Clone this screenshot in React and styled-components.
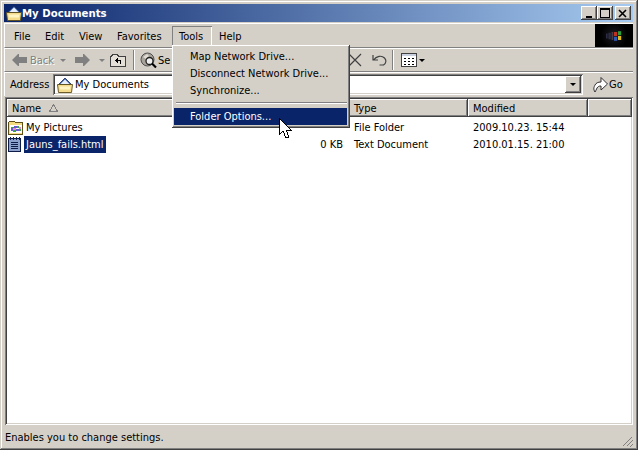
import React from "react";
import styled, { createGlobalStyle } from "styled-components";

const Global = createGlobalStyle`
html,body{margin:0;padding:0;background:#d4d0c8;}
*{box-sizing:border-box;}
body{font-family:"DejaVu Sans Condensed","DejaVu Sans","Liberation Sans",sans-serif;font-size:11px;color:#000;}
`
const Frame = styled.div`
width:638px;
height:450px;
background:#d4d0c8;
padding:4px 5px 2px 4px;
display:flex;
flex-direction:column;
position:relative;
overflow:hidden;
box-shadow:inset -1px -1px 0 #404040, inset 1px 1px 0 #d4d0c8, inset -2px -2px 0 #808080, inset 2px 2px 0 #fff;
`
const TitleBar = styled.div`
height:18px;
flex:none;
display:flex;
align-items:center;
padding:0 2px;
background:linear-gradient(90deg,#0a246a,#a6caf0);
color:#fff;
font-weight:700;
font-size:11.300px;
margin-bottom:1px;
`
const TitleText = styled.span`
flex:1;
`
const WinBtn = styled.div`
width:16px;
height:14px;
margin-left:${p=>p.$gap||0}px;
background:#d4d0c8;
box-shadow:inset -1px -1px 0 #404040, inset 1px 1px 0 #fff, inset -2px -2px 0 #808080;
display:flex;
align-items:center;
justify-content:center;
`
const MenuRow = styled.div`
height:25px;
flex:none;
display:flex;
align-items:stretch;
border-top:1px solid #fff;
border-bottom:1px solid #808080;
border-left:1px solid #fff;
padding:2px 0 0 2px;
`
const MenuItem = styled.div`
width:${p=>p.$w}px;
height:20px;
padding:0 7px;
display:flex;
align-items:center;
${p=>p.$open && "box-shadow:inset 1px 1px 0 #808080, inset -1px -1px 0 #fff;"}
`
const Brand = styled.div`
margin-left:auto;
margin-top:-2px;
width:38px;
height:23px;
background:radial-gradient(circle at 50% 50%,#1c1c24 0,#000 60%);
display:flex;
align-items:center;
justify-content:center;
`
const Toolbar = styled.div`
height:24px;
flex:none;
display:flex;
align-items:center;
border-top:1px solid #fff;
border-bottom:1px solid #808080;
border-left:1px solid #fff;
padding-left:7px;
`
const Tool = styled.div`
display:flex;
align-items:center;
margin-left:${p=>p.$ml||0}px;
color:${p=>p.$off?"#808080":"#000"};
${p=>p.$off && "text-shadow:1px 1px 0 #fff;"}
`
const ToolLabel = styled.span`
margin-left:${p=>p.$ml||0}px;
`
const Caret = styled.div`
width:0;
height:0;
margin-left:${p=>p.$ml||0}px;
border-left:3px solid transparent;
border-right:3px solid transparent;
border-top:3px solid ${p=>p.$off?"#808080":"#000"};
`
const ToolSep = styled.div`
width:2px;
height:20px;
margin-left:${p=>p.$ml||0}px;
border-left:1px solid #808080;
border-right:1px solid #fff;
`
const AddressRow = styled.div`
height:24px;
flex:none;
display:flex;
align-items:center;
border-top:1px solid #fff;
border-left:1px solid #fff;
padding-left:5px;
`
const AddressLabel = styled.span`
width:43px;
`
const Combo = styled.div`
width:530px;
height:21px;
display:flex;
align-items:center;
background:#fff;
box-shadow:inset 1px 1px 0 #808080, inset -1px -1px 0 #fff, inset 2px 2px 0 #404040, inset -2px -2px 0 #d4d0c8;
padding:0 2px 0 4px;
`
const ComboText = styled.span`
margin-left:2px;
flex:1;
`
const ComboBtn = styled.div`
width:16px;
height:17px;
background:#d4d0c8;
box-shadow:inset -1px -1px 0 #404040, inset 1px 1px 0 #fff, inset -2px -2px 0 #808080;
display:flex;
align-items:center;
justify-content:center;
`
const Go = styled.div`
display:flex;
align-items:center;
margin-left:10px;
`
const List = styled.div`
flex:1;
display:flex;
flex-direction:column;
background:#fff;
margin:1px 0 0 1px;
box-shadow:inset 1px 1px 0 #808080, inset -1px -1px 0 #fff, inset 2px 2px 0 #404040, inset -2px -2px 0 #d4d0c8;
padding:2px 0 2px 2px;
`
const Header = styled.div`
height:18px;
flex:none;
display:flex;
background:#d4d0c8;
margin-right:1px;
`
const HeadCell = styled.div`
width:${p=>p.$w}px;
flex:${p=>p.$grow?1:"none"};
height:18px;
display:flex;
align-items:center;
padding-left:5px;
box-shadow:inset -1px -1px 0 #404040, inset 1px 1px 0 #fff, inset -2px -2px 0 #808080;
`
const SortMark = styled.svg`
margin-left:8px;
`
const Row = styled.div`
height:17px;
display:flex;
align-items:center;
margin-top:${p=>p.$mt||0}px;
`
const NameCell = styled.div`
width:254px;
display:flex;
align-items:center;
padding-left:1px;
`
const NameText = styled.span`
height:17px;
line-height:17px;
padding:0 2px;
${p=>p.$sel && "background:#0a246a;color:#fff;"}
`
const SizeCell = styled.div`
width:88px;
padding-right:6px;
text-align:right;
`
const TypeCell = styled.div`
width:119px;
padding-left:5px;
`
const DateCell = styled.div`
padding-left:5px;
`
const Status = styled.div`
height:23px;
flex:none;
display:flex;
align-items:center;
padding:1px 0 0 1px;
position:relative;
`
const Grip = styled.svg`
position:absolute;
right:0;
bottom:1px;
`
const Dropdown = styled.div`
position:absolute;
left:172px;
top:45px;
width:178px;
height:83px;
background:#d4d0c8;
padding:3px 3px 3px 2px;
box-shadow:inset -1px -1px 0 #404040, inset 1px 1px 0 #fff, inset -2px -2px 0 #808080;
`
const DropItem = styled.div`
height:17px;
display:flex;
align-items:center;
padding-left:16px;
${p=>p.$sel && "background:#0a246a;color:#fff;"}
`
const DropSep = styled.div`
height:2px;
margin:3px 0 4px 2px;
border-top:1px solid #808080;
border-bottom:1px solid #fff;
`
const Pointer = styled.svg`
position:absolute;
left:279px;
top:118px;
`
const BlurFlag = styled.svg`
filter:blur(0.5px);
`
const IconSvg = styled.svg`
flex:none;
`

const FolderIcon = ()=>(
    <IconSvg width="16" height="16" viewBox="0 0 16 16">
        <path d="M1 8l7-7 6 6v2h-13z" fill="#3c62ac" stroke="#1c2c5c" strokeWidth="0.800"/>
        <path d="M8 2.500l4.500 4.500h-9z" fill="#e8f0ff"/>
        <path d="M0.500 7.500h15l-1 8h-13z" fill="#f4dc8c" stroke="#5a4c18" strokeWidth="0.900"/>
        <path d="M2.500 9.500h11l-0.500 3h-10z" fill="#fff4c4"/>
    </IconSvg>
)
const PicturesIcon = ()=>(
    <IconSvg width="16" height="16" viewBox="0 0 16 16" shapeRendering="crispEdges">
        <path d="M0.500 2.500l1-1h5l1 1h7v12h-14z" fill="#f6dc80" stroke="#5c5018"/>
        <rect x="2" y="5" width="12" height="8" fill="#fff"/>
        <path d="M3 7h3v1h-3zM9 6h2v2h-2zM5 10h3v2h-3zM11 9h2v2h-2z" fill="#35a548"/>
        <path d="M6 6h3v2h-3zM3 8h2v3h-2zM8 9h3v2h-3z" fill="#6a58d0"/>
        <path d="M11 7h2v2h-2zM5 8h3v2h-3z" fill="#e88ab8"/>
    </IconSvg>
)
const NoteIcon = ()=>(
    <IconSvg width="16" height="16" viewBox="0 0 16 16" shapeRendering="crispEdges">
        <rect x="0.500" y="1.500" width="12" height="13" fill="#8ca2cc" stroke="#101c48"/>
        <path d="M2 0h1v3h-1zM5 0h1v3h-1zM8 0h1v3h-1zM11 0h1v3h-1z" fill="#101c48"/>
        <path d="M3 5h7v1h-7zM3 7h7v1h-7zM3 9h7v1h-7zM3 11h7v1h-7z" fill="#101c48"/>
    </IconSvg>
)
const Arrow = ({flip})=>(
    <svg width="15" height="12" viewBox="0 0 15 12" style={{transform:flip?"scaleX(-1)":"none"}}>
        <path d="M6 0h1v3h8v6h-8v3h-1l-6-6z" fill="#808080"/>
    </svg>
)
const UpIcon = ()=>(
    <svg width="16" height="14" viewBox="0 0 16 14" shapeRendering="crispEdges">
        <path d="M0.500 13.500v-10h1l1-2h5l1 2h7v10z" fill="#e4e0d8" stroke="#404040"/>
        <path d="M5 7h1v-1h1v-1h1v2h3v4h-1v-3h-2v2h-1v-1h-1v-1h-1z" fill="#000"/>
    </svg>
)
const SearchIcon = ()=>(
    <svg width="17" height="17" viewBox="0 0 17 17">
        <circle cx="7.500" cy="7.500" r="6.500" fill="#a8a49c" stroke="#505050"/>
        <path d="M3 5l4-3 2 2-3 3zM9 11l3-2 1 1-3 3z" fill="#e0dcd4"/>
        <circle cx="9.500" cy="9" r="3.500" fill="#f0f0f0" stroke="#202020" strokeWidth="1.300"/>
        <path d="M12 11.500l4 4" stroke="#000" strokeWidth="2.200"/>
    </svg>
)
const Views = ()=>(
    <svg width="16" height="14" viewBox="0 0 16 14" shapeRendering="crispEdges">
        <rect x="0.500" y="0.500" width="15" height="13" fill="#fff" stroke="#404040"/>
        <path d="M1 1h14v2h-14z" fill="#c8d0e0"/>
        <path d="M3 5h2v1h-2zM7 5h2v1h-2zM11 5h2v1h-2zM3 8h2v1h-2zM7 8h2v1h-2zM11 8h2v1h-2zM3 11h2v1h-2zM7 11h2v1h-2zM11 11h2v1h-2z" fill="#000"/>
    </svg>
)
const GoIcon = ()=>(
    <svg width="16" height="17" viewBox="0 0 16 17">
        <path d="M2 16c-2-3-1-5 0-7 1-2 3-3 6-3v-4.500l6.500 6.500-6.500 6v-4c-2 0-3 .500-4 2-.800 1.500-1.200 3-2 4z" fill="#fff" stroke="#303030"/>
    </svg>
)
const Flag = ()=>(
    <BlurFlag width="16" height="12" viewBox="0 0 20 14">
        <path d="M0 4h2v6h-2zM3 3h3v8h-3z" fill="#2c2c44"/>
        <path d="M7 2h2v10h-2z" fill="#4a3c44"/>
        <path d="M10 2h4v5h-4z" fill="#c03020"/>
        <path d="M15 1h4v5h-4z" fill="#2f9a3a"/>
        <path d="M10 8h4v5h-4z" fill="#3058b8"/>
        <path d="M15 7h4v5h-4z" fill="#e0b820"/>
    </BlurFlag>
)

const App = ()=>{
    return(
        <>
            <Global/>
            <Frame>
                <TitleBar>
                    <FolderIcon/>
                    <TitleText>My Documents</TitleText>
                    <WinBtn>
                        <svg width="8" height="9" shapeRendering="crispEdges"><path d="M1 7h6v2h-6z" fill="#000"/></svg>
                    </WinBtn>
                    <WinBtn>
                        <svg width="10" height="10" shapeRendering="crispEdges"><path d="M0.500 1.500h9v8h-9zM0 0.500h10" fill="none" stroke="#000"/></svg>
                    </WinBtn>
                    <WinBtn $gap={2}>
                        <svg width="10" height="9"><path d="M1 1l7 7M8 1l-7 7" stroke="#000" strokeWidth="1.600"/></svg>
                    </WinBtn>
                </TitleBar>
                <MenuRow>
                    <MenuItem $w={31}>File</MenuItem>
                    <MenuItem $w={34}>Edit</MenuItem>
                    <MenuItem $w={38}>View</MenuItem>
                    <MenuItem $w={62}>Favorites</MenuItem>
                    <MenuItem $w={40} $open>Tools</MenuItem>
                    <MenuItem $w={40}>Help</MenuItem>
                    <Brand><Flag/></Brand>
                </MenuRow>
                <Toolbar>
                    <Tool $off><Arrow/><ToolLabel $ml={3}>Back</ToolLabel></Tool>
                    <Caret $off $ml={6}/>
                    <Tool $ml={9}><Arrow flip/></Tool>
                    <Caret $off $ml={9}/>
                    <Tool $ml={5}><UpIcon/></Tool>
                    <ToolSep $ml={7}/>
                    <Tool $ml={5}><SearchIcon/><ToolLabel $ml={1}>Se</ToolLabel></Tool>
                    <Tool $ml={178}>
                        <svg width="14" height="14"><path d="M1 1l12 12M13 1l-12 12" stroke="#404040" strokeWidth="1.200"/></svg>
                    </Tool>
                    <Tool $ml={10}>
                        <svg width="16" height="12" viewBox="0 0 16 12"><path d="M1 1v5h5M1.500 6c3-4 8-5 11-2 2 2 2 5-1 7h-4" fill="none" stroke="#404040" strokeWidth="1.200"/></svg>
                    </Tool>
                    <ToolSep $ml={4}/>
                    <Tool $ml={7}><Views/></Tool>
                    <Caret $ml={2}/>
                </Toolbar>
                <AddressRow>
                    <AddressLabel>Address</AddressLabel>
                    <Combo>
                        <FolderIcon/>
                        <ComboText>My Documents</ComboText>
                        <ComboBtn><Caret/></ComboBtn>
                    </Combo>
                    <Go><GoIcon/>Go</Go>
                </AddressRow>
                <List>
                    <Header>
                        <HeadCell $w={254}>Name<SortMark width="9" height="8" shapeRendering="crispEdges"><path d="M4.500 0.500l4 7h-8z" fill="none" stroke="#808080"/></SortMark></HeadCell>
                        <HeadCell $w={88}/>
                        <HeadCell $w={119}>Type</HeadCell>
                        <HeadCell $w={120}>Modified</HeadCell>
                        <HeadCell $grow/>
                    </Header>
                    <Row $mt={2}>
                        <NameCell><PicturesIcon/><NameText>My Pictures</NameText></NameCell>
                        <SizeCell/>
                        <TypeCell>File Folder</TypeCell>
                        <DateCell>2009.10.23. 15:44</DateCell>
                    </Row>
                    <Row>
                        <NameCell><NoteIcon/><NameText $sel>Jauns_fails.html</NameText></NameCell>
                        <SizeCell>0 KB</SizeCell>
                        <TypeCell>Text Document</TypeCell>
                        <DateCell>2010.01.15. 21:00</DateCell>
                    </Row>
                </List>
                <Status>
                    Enables you to change settings.
                    <Grip width="12" height="12" viewBox="0 0 12 12" shapeRendering="crispEdges">
                        <path d="M11 1v1h-1v1h-1v1h-1v1h-1v1h-1v1h-1v1h-1v1h-1v1h-1v1h1v-1h1v-1h1v-1h1v-1h1v-1h1v-1h1v-1h1v-1h1z" fill="#808080"/>
                        <path d="M11 5v1h-1v1h-1v1h-1v1h-1v1h-1v1h1v-1h1v-1h1v-1h1v-1h1v-1h1z" fill="#808080"/>
                        <path d="M11 9v1h-1v1h-1v1h1v-1h1v-1h1z" fill="#808080"/>
                    </Grip>
                </Status>
                <Dropdown>
                    <DropItem>Map Network Drive...</DropItem>
                    <DropItem>Disconnect Network Drive...</DropItem>
                    <DropItem>Synchronize...</DropItem>
                    <DropSep/>
                    <DropItem $sel>Folder Options...</DropItem>
                </Dropdown>
                <Pointer width="13" height="21" viewBox="0 0 13 21" shapeRendering="crispEdges">
                    <path d="M0.500 0.500v16l3.500-3.500 3 7 3-1-3-7h5z" fill="#fff" stroke="#000"/>
                </Pointer>
            </Frame>
        </>
    )
}

export default App;
